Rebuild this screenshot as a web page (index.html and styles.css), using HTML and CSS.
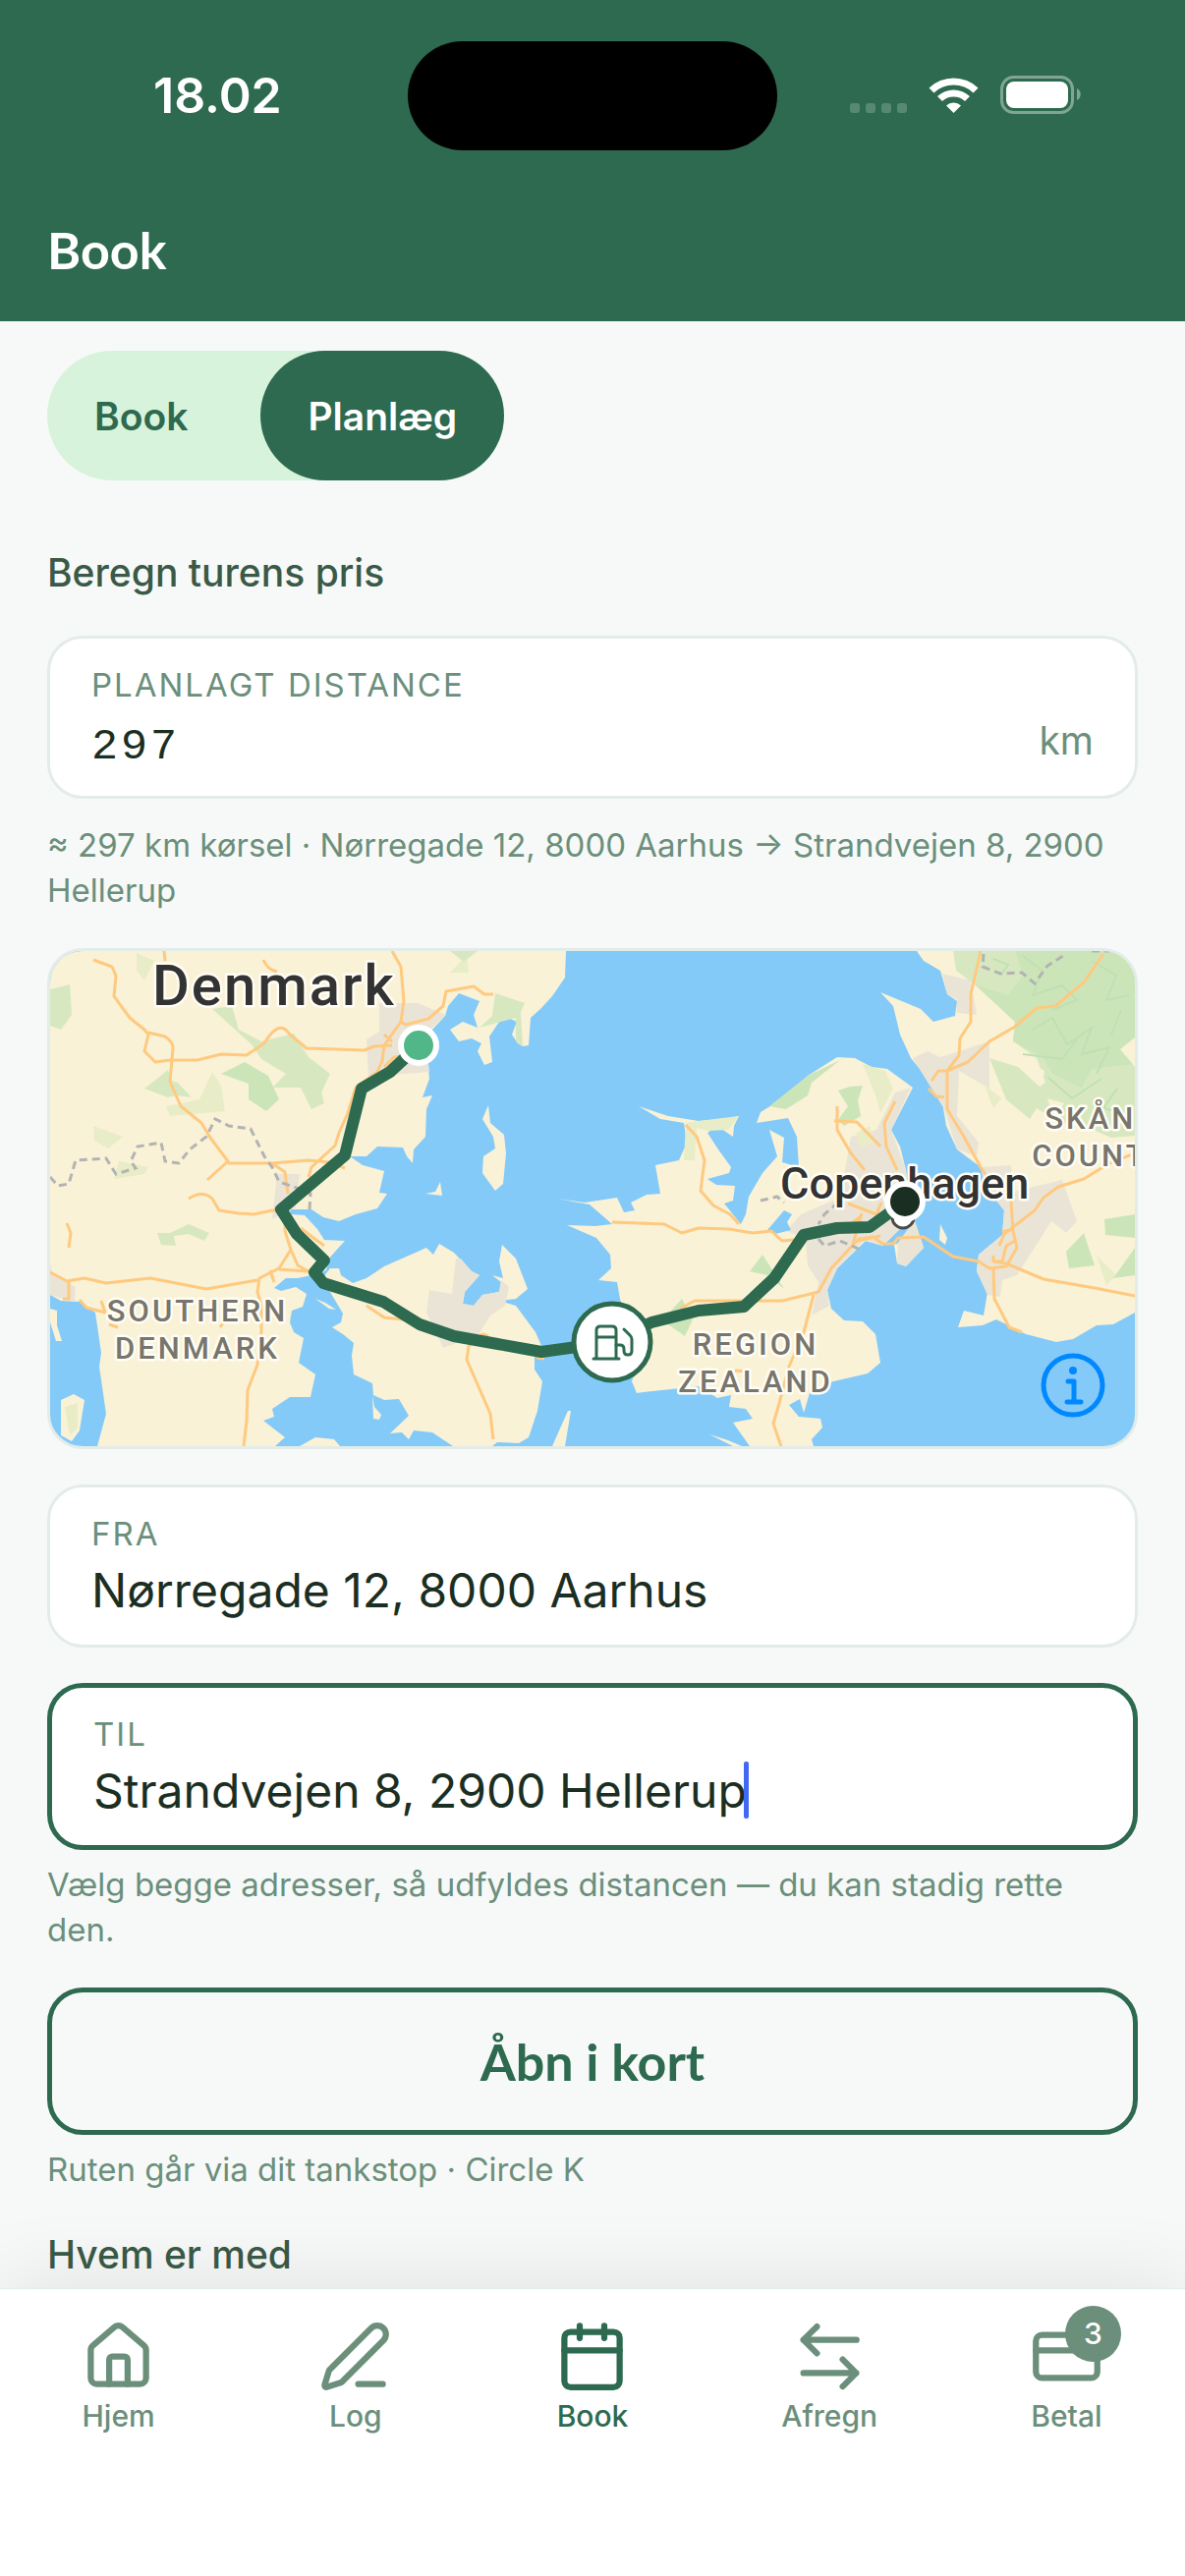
FILE: index.html
```html
<!DOCTYPE html>
<html lang="da">

<head>
    <meta charset="UTF-8">
    <meta name="viewport" content="width=device-width, initial-scale=1.0">
    <title>Book</title>
    <link rel="stylesheet" href="styles.css">
</head>

<body>
    <header class="header">
        <div class="status">
            <span class="status-time">18.02</span>
            <span class="island"></span>
            <svg class="status-icons" width="236" height="40" viewBox="0 0 236 40" fill="#fff">
                <g opacity="0.2">
                    <rect x="0" y="28" width="10" height="10" rx="3" />
                    <rect x="16" y="28" width="10" height="10" rx="3" />
                    <rect x="32" y="28" width="10" height="10" rx="3" />
                    <rect x="48" y="28" width="10" height="10" rx="3" />
                </g>
                <path d="M80.5 12.5a36 36 0 0 1 50 0l-5 5a29 29 0 0 0-40 0z" />
                <path d="M89 21a24 24 0 0 1 33 0l-5 5a17 17 0 0 0-23 0z" />
                <path d="M98 30.5a11 11 0 0 1 15 0l-7.5 7.5z" />
                <rect x="154.5" y="1.5" width="72" height="36" rx="12" fill="none" stroke="#fff" stroke-width="3" opacity="0.4" />
                <rect x="159" y="6" width="63" height="27" rx="8" />
                <path d="M231 13c5 2 5 10 0 12z" opacity="0.4" />
            </svg>
        </div>
        <h1 class="title">Book</h1>
    </header>

    <main class="content">
        <div class="segment">
            <button type="button">Book</button>
            <button type="button" class="active">Planlæg</button>
        </div>

        <h2 class="section-title">Beregn turens pris</h2>

        <div class="field">
            <label for="distance">PLANLAGT DISTANCE</label>
            <div class="field-row">
                <input id="distance" class="mono" type="text" value="297">
                <span class="unit">km</span>
            </div>
        </div>
        <p class="hint hint-far">≈ 297 km kørsel · Nørregade 12, 8000 Aarhus → Strandvejen 8, 2900 Hellerup</p>

        <div class="map">
            <svg class="map-canvas" viewBox="0 0 1104 504">
                <!-- land -->
                <g class="land">
                    <path d="M0 0H525L524 27 511 46 500 58 489 68 487 96 481 97 476 94 470 85 475 72 462 66 455 75 447 87 450 113 442 116 435 102 439 94 429 89 416 92 407 80 420 72 435 78 431 65 437 51 416 43 405 56 402 66 389 80 381 96 385 120 386 130 379 149 389 147 383 161 382 189 370 202 369 216 363 209 359 200 333 199 322 209 305 209 318 218 340 224 335 246 343 247 333 262 311 268 294 275 278 271 266 263H244L245 268 259 269 272 283 279 294 300 295 290 306 283 314 281 325 266 330 252 333 240 333 228 343 235 346 250 342 261 349 257 362 246 366 244 378 248 388 258 394 253 419 270 431 265 454H244L226 466 228 474 217 478 239 495 229 504H48L57 471 50 423 52 409 46 368 30 357 11 356 0 350z" />
                    <path d="M285 323H294L296 330 308 338 322 333 340 321 383 302 390 309 396 298 411 307 429 326 437 330 422 347 420 359 431 361 440 350 457 347 459 337 450 330 461 333 457 316 460 299 474 313 486 344 474 354 457 356 474 361 494 388 501 404 493 414 493 426 501 438 496 468 487 495 477 501 455 500 450 504H410L389 490 370 488 365 497 358 490 346 491 365 473 355 456 340 457 329 452 328 440 309 431 307 412 309 399 298 390 287 383 296 378 298 369 285 347 274 337z" />
                    <path d="M446 157 448 175 462 187 464 206 461 237 453 244 440 226 441 209 453 201 451 189 440 171z" />
                    <path d="M382 247 392 245 397 235 399 249zM254 504 270 495 289 497 295 504zM511 504 527 468 530 468 524 504zM11 457 24 451 35 457 30 488 22 499 11 493zM0 364 7 366 7 381 12 397 6 397 0 378zM270 354 280 358 291 365 284 364zM328 452 330 464 337 472 335 477 329 476z" />
                    <path d="M516 252 544 256 577 251 584 266 595 264 591 256 607 248 621 247 616 218 640 213 648 195 645 175 621 171 599 158 629 168 660 173 686 171 701 168 696 178 695 189 679 178 669 185 680 202 693 220 691 226 669 232 678 238 697 239 695 254 686 257 703 278 708 268 711 250 725 226 740 209 732 182 747 190 745 215 762 220 760 189 751 170 719 175 723 164 751 147 771 127 801 108 819 109 836 118 852 120 878 139 856 182 865 199 871 223 875 257 871 278 854 294 847 300 830 295 801 323 791 345 795 364 808 376 827 377 840 390 845 419 832 430 793 439 773 450 767 470 763 456 752 462 762 474 784 476 786 485 775 497 777 504H712L695 480 715 476 708 466 691 464 693 452 679 455 660 443 604 449 597 450 592 438 598 420 580 354 577 337 558 335 571 323 570 309 556 292 526 279 555 280 572 278 549 258z" />
                    <path d="M863 292 880 275 889 302 871 321 862 318 859 299zM906 278 913 292 911 299 905 294zM671 492 690 498 704 504 695 504z" />
                    <path d="M882 0 889 10 906 20 913 44 923 51 921 66 899 72 886 59 845 42 858 56 865 85 876 109 895 132 908 154 912 178 923 202 947 220 952 240 971 264 969 289 945 309 943 326 954 347 950 371 930 366 924 383 949 381 963 375 993 390 1024 398 1041 395 1065 381 1082 380 1104 368V0z" />
                </g>

                <!-- towns -->
                <g class="urban">
                    <path d="M335 53H374L403 65 381 85 386 123 324 128 322 90 335 82zM231 227H254L250 261 226 273zM0 318 3 330 26 342 25 357 0 350z" />
                    <path d="M386 345 409 349 413 313 418 313 429 326 437 330 422 347 420 359 431 361 440 350 457 347 459 335 467 342 463 361 448 371 435 392 400 404 383 368z" />
                    <path d="M876 139 856 182 871 223 875 257 863 289 845 299 828 295 801 323 791 345 793 361 775 371 782 337 771 320 769 292 749 285 764 268 804 251 815 189 841 182 860 144zM863 292 880 275 889 302 871 321 862 318z" />
                    <path d="M878 109 893 102 906 108 956 92 956 140 925 122 923 168 945 195 943 209 923 202 910 161zM908 23 937 30 943 65 923 63 923 49 913 44z" />
                    <path d="M947 220 978 218 980 245 1030 233 1045 275 1034 287 1019 275 984 330 969 335 967 352 954 350 943 326 945 309 969 289 971 264 952 240z" />
                </g>

                <!-- woods -->
                <g class="wood-light">
                    <path d="M118 158 152 151 165 123 174 137 178 163 122 168zM44 178 74 189 59 201 45 193zM70 214 100 220 96 227 65 232zM15 464 28 460 28 485 20 493zM88 2 106 10 96 30 88 20zM407 22 424 4 426 22z" />
                    <path d="M647 175 660 173 701 168 690 182 669 183 658 180 656 213 645 213zM827 115 850 122 858 140 845 165 841 150zM820 185 834 178 838 195 825 200zM950 135 968 150 960 160zM1023 118 1060 130 1050 150zM1065 310 1085 330 1075 340z" />
                </g>
                <g class="wood">
                    <path d="M165 59 185 56 192 80 215 92 248 84 263 108 285 125 276 144 279 155 266 161 255 139H226L240 125 215 110 205 95z" />
                    <path d="M96 140 120 121 124 132 130 134 144 149 128 147 120 149zM0 39 20 34 22 65 11 80 0 76zM109 287 122 287 141 278 162 287 157 295 141 288 126 290 128 300 113 299zM453 43 483 53 479 62 481 97 474 92 474 68 437 78 450 66zM407 0H435L421 11z" />
                    <path class="deep" d="M174 125 198 113 222 127 233 151 220 163 202 151 202 135z" />
                    <path class="deep" d="M732 158 771 127 804 111 775 134 771 147 749 161zM802 142 814 138 827 137 822 152 825 168 808 178 802 172 812 158zM712 326 725 309 736 326 747 344 730 330zM623 376 643 354 654 375 646 392zM1034 306 1052 287 1063 320 1037 323zM1073 273 1104 268V292L1074 289zM1082 333 1104 302V330z" />
                    <path d="M919 0 922 20 941 34 982 72 980 92 1004 109 1013 134 1007 138 985 118 956 109 973 151 997 171 1004 160 1028 175 1052 178 1080 190 1104 188V0z" />
                    <path class="deep" d="M982 0 990 25 975 45 941 34 982 72 980 92 1010 108 1020 125 1050 140 1060 120 1104 115V0z" />
                    <path class="clearing" d="M1089 100 1104 88V118zM1015 150 1032 155 1022 172zM1000 114 1012 122 1010 134 990 122z" />
                    <path class="wood-lines" d="M990 5 1010 20 1000 45 1030 35 1045 50 1020 60M1060 10 1085 25 1075 50 1098 45M1000 80 1020 68 1035 95 1060 78 1050 105 1078 98 1065 125M1090 60 1080 85M960 8 975 14 968 24M990 105 1030 110 1045 90M1015 128 1040 150 1070 130M1086 140 1072 160 1094 166" />
                </g>

                <!-- fjords -->
                <path class="water" d="M730 284 747 264 755 268 750 276 754 284 738 288zM848 300 864 284 878 276 862 298z" />

                <!-- roads -->
                <g class="roads">
                    <path d="M44 9 63 16 67 25 65 46 81 68 96 80 100 85 96 102 107 113 122 111 150 111 174 105 200 106 218 94Q233 68 244 85L261 99 320 101 330 97 348 96" />
                    <path d="M100 83 117 87Q126 94 125 99L122 133 133 158 154 175 163 190 181 214 160 233M181 216H226L263 213 285 215 300 221M226 216 239 225 242 247" />
                    <path d="M348 0 357 16 360 51 357 72 340 96 338 112 333 123 311 139 303 165 294 185 290 198 266 220 263 230M357 72 362 75 385 69 400 56 403 41 431 36 442 44H451M340 85 348 92M340 118 350 108 365 106" />
                    <path d="M141 252Q155 243 165 252L172 264 192 267 207 268 226 264 236 265M239 268V285L245 304 233 323 213 333 211 347 215 361V388L211 421 201 447 200 478 197 504M245 304 252 320 263 326 233 324M255 282 268 292 279 300M224 325 228 337" />
                    <path d="M0 327 17 336 35 333 57 338 102 333 159 344 211 335M19 337V354H13M30 355 37 363 56 368 52 356M17 277 21 287 19 302M217 9Q221 19 231 21M116 0 117 10M173 383 178 376M60 380 69 383" />
                    <path d="M322 361 340 373 359 375M446 392 440 390 426 402 424 416 448 471 451 497M495 414 503 415" />
                    <path d="M572 276 625 278 643 287 660 282 691 283 715 287 734 285 745 295 767 293M647 177 658 189 666 213 662 244 675 259 692 268 701 278" />
                    <path d="M641 364 656 356 745 356 782 347 795 323 821 295 845 290M817 299 823 293 838 291 847 298H858L863 292 889 291 919 311 945 316 956 323 973 321 984 302 980 285 978 254M777 350 767 388 752 423 741 464 736 481 744 504M697 427 708 428" />
                    <path d="M801 158V182L815 206 829 223M798 173 821 174 845 199M860 153 849 175 851 199 862 223M817 299 822 280 826 267M812 257 841 268 846 256M825 270 815 278" />
                    <path d="M947 0 937 44V72L926 89 925 106 913 122V161L930 189 947 220 955 232M897 132 904 122 913 122 934 113 956 92 982 77 1004 58 1023 56 1052 32 1072 3M894 140 902 148 910 149" />
                    <path d="M966 300 971 288 1002 264 1011 251 1026 240 1052 232 1078 216 1104 206M960 316 969 316 973 300 982 295M960 310V316L973 318 1011 334 1063 343 1104 351M960 323 961 354 976 383 989 388M969 286 980 283" />
                </g>

                <!-- county borders -->
                <g class="borders">
                    <path d="M0 230 8 239 19 237 26 213 57 211 67 227 87 221 82 214 89 199 113 195 117 214 131 216 142 202 159 189 168 171 182 178 204 181 218 209 226 220 233 235 248 240 265 247 264 263" />
                    <path d="M950 3 949 16 967 23 989 22 1002 33 1015 15 1034 3M1060 0H1078M723 254 740 250 747 256M802 256 788 268 782 278M782 293 788 300 804 295 827 305" />
                </g>

                <g class="labels">
                    <text class="label-country" x="104" y="55">Denmark</text>
                    <text class="label-city" x="743" y="252">Copenhagen</text>
                    <text class="label-region" x="150" y="377">SOUTHERN</text>
                    <text class="label-region" x="150" y="415">DENMARK</text>
                    <text class="label-region" x="718" y="411">REGION</text>
                    <text class="label-region" x="718" y="449">ZEALAND</text>
                    <text class="label-region" x="1069" y="181">SKÅNE</text>
                    <text class="label-region" x="1069" y="219">COUNTY</text>
                </g>

                <!-- route -->
                <circle cx="868" cy="271" r="11" fill="#fff" stroke="#4a4a4a" stroke-width="3" />
                <path class="route" d="M375 96 346 123 317 140 300 208 235 263 251 288 279 315 269 327 278 338 339 357 376 380 411 392 500 408 572 398 612 378 660 366 706 362 737 333 767 289 801 282 834 281 870 255" />
                <circle cx="375" cy="96" r="18" fill="#52b788" stroke="#fff" stroke-width="6" />
                <circle cx="870" cy="255" r="18" fill="#1b2e22" stroke="#fff" stroke-width="6" />
                <circle cx="572" cy="398" r="39" fill="#fff" stroke="#2d6a4f" stroke-width="5" />
                <g class="fuel">
                    <path d="M556 415V386Q556 382 560 382H572Q576 382 576 386V415M553 415H579M556 393H576" />
                    <path d="M576 401H580Q584 401 584 405V407Q584 411 588 411 592 411 592 407V395Q592 393 590 391L584 385" />
                </g>
            </svg>
            <button type="button" class="map-info" aria-label="Info">
                <svg width="66" height="66" viewBox="0 0 66 66" fill="none" stroke="#0088ff">
                    <circle cx="33" cy="33" r="30" stroke-width="5" />
                    <circle cx="33" cy="18" r="4" fill="#0088ff" stroke="none" />
                    <path d="M28 29h6v20M27 50h14" stroke-width="5" stroke-linecap="round" stroke-linejoin="round" />
                </svg>
            </button>
        </div>

        <div class="field">
            <label for="from">FRA</label>
            <div class="field-row">
                <input id="from" type="text" value="Nørregade 12, 8000 Aarhus">
            </div>
        </div>

        <div class="field focused">
            <label for="to">TIL</label>
            <div class="field-row">
                <input id="to" type="text" value="Strandvejen 8, 2900 Hellerup">
                <span class="caret"></span>
            </div>
        </div>
        <p class="hint">Vælg begge adresser, så udfyldes distancen — du kan stadig rette den.</p>

        <button type="button" class="open-map">Åbn i kort</button>
        <p class="hint">Ruten går via dit tankstop · Circle K</p>

        <h2 class="section-title last">Hvem er med</h2>
    </main>

    <nav class="tabs">
        <a href="#hjem">
            <svg class="icon" viewBox="0 0 24 24">
                <path d="M15 21v-8a1 1 0 0 0-1-1h-4a1 1 0 0 0-1 1v8" />
                <path d="M3 10a2 2 0 0 1 .709-1.528l7-6a2 2 0 0 1 2.582 0l7 6A2 2 0 0 1 21 10v9a2 2 0 0 1-2 2H5a2 2 0 0 1-2-2z" />
            </svg>
            Hjem
        </a>
        <a href="#log">
            <svg class="icon" viewBox="0 0 24 24">
                <path d="M13 21h8" />
                <path d="M21.174 6.812a1 1 0 0 0-3.986-3.987L3.842 16.174a2 2 0 0 0-.5.83l-1.321 4.352a.5.5 0 0 0 .623.622l4.353-1.32a2 2 0 0 0 .83-.497z" />
            </svg>
            Log
        </a>
        <a href="#book" class="active">
            <svg class="icon" viewBox="0 0 24 24">
                <path d="M8 2v4M16 2v4M3 10h18" />
                <rect x="3" y="4" width="18" height="18" rx="2" />
            </svg>
            Book
        </a>
        <a href="#afregn">
            <svg class="icon" viewBox="0 0 24 24">
                <path d="M7.8 2.3 3.4 6.6l4.4 4.4M3.4 6.6h17.3M16.2 13l4.4 4.4-4.4 4.4M20.6 17.4H3.4" />
            </svg>
            Afregn
        </a>
        <a href="#betal">
            <span class="icon-wrap">
                <svg class="icon" viewBox="0 0 24 24">
                    <rect x="2" y="5" width="20" height="14" rx="2" />
                    <path d="M2 10h20" />
                </svg>
                <span class="badge">3</span>
            </span>
            Betal
        </a>
    </nav>
</body>

</html>
```

FILE: styles.css
```css
* {
    box-sizing: border-box;
}

body {
    display: flex;
    flex-direction: column;
    min-height: 100vh;
    margin: 0;
    font-family: Inter, "Noto Sans", sans-serif;
    color: #1b2e22;
    background: #f7f9f8;
}

h1,
h2,
p {
    margin: 0;
}

button,
input {
    padding: 0;
    border: 0;
    font-family: inherit;
    color: inherit;
    background: none;
}

/* header */
.header {
    color: #fff;
    background: #2d6a4f;
}

.status {
    display: grid;
    grid-template-columns: 1fr 376px 1fr;
    align-items: center;
    height: 188px;
    padding-top: 6px;
}

.status-time {
    padding-left: 156px;
    font-size: 50px;
    font-weight: 600;
}

.island {
    height: 111px;
    border-radius: 56px;
    background: #000;
}

.status-icons {
    margin-left: 74px;
}

.title {
    padding: 36px 48px 43px;
    font-family: Lato, sans-serif;
    font-size: 52px;
    font-weight: 700;
    line-height: 60px;
}

/* content */
.content {
    flex: 1;
    padding: 30px 48px 0;
}

.segment {
    display: flex;
    gap: 26px;
    width: fit-content;
    border-radius: 66px;
    background: #d8f3dc;
}

.segment button {
    height: 132px;
    padding: 0 48px;
    border-radius: 66px;
    font-size: 39px;
    font-weight: 600;
    color: #2d6a4f;
}

.segment .active {
    color: #fff;
    background: #2d6a4f;
}

.section-title {
    margin: 66px 0 36px;
    font-size: 39px;
    font-weight: 500;
    line-height: 56px;
    color: #3a5a47;
}

.section-title.last {
    margin: 36px 0 0;
}

.field {
    margin-bottom: 36px;
    padding: 27px 42px;
    border: 3px solid #e3ece8;
    border-radius: 36px;
    background: #fff;
}

.field label {
    display: block;
    margin-bottom: 8px;
    font-size: 33px;
    line-height: 40px;
    letter-spacing: 2px;
    color: #6b8f7b;
}

.field-row {
    display: flex;
    align-items: center;
}

.field input {
    flex: 1;
    min-width: 0;
    height: 58px;
    font-size: 48px;
    outline: 0;
}

.field .mono {
    padding-top: 12px;
    font-family: "Liberation Mono", monospace;
    font-size: 45px;
    letter-spacing: 3px;
}

.unit {
    font-size: 39px;
    line-height: 58px;
    color: #6b8f7b;
}

.focused {
    margin-bottom: 0;
    border: 5px solid #2d6a4f;
}

.focused input {
    flex: none;
    field-sizing: content;
}

.caret {
    width: 5px;
    height: 58px;
    margin-left: -3px;
    border-radius: 2px;
    background: #4169f5;
}

.hint {
    margin-top: 12px;
    font-size: 33px;
    line-height: 46px;
    color: #6b8f7b;
}

.hint-far {
    margin: -12px 0 36px;
}

.open-map {
    display: block;
    width: 100%;
    height: 150px;
    margin-top: 36px;
    border: 5px solid #2d6a4f;
    border-radius: 36px;
    font-family: Lato, sans-serif;
    font-size: 52px;
    font-weight: 700;
    color: #2d6a4f;
}

/* map */
.map {
    position: relative;
    margin-bottom: 36px;
    border: 3px solid #e3ece8;
    border-radius: 36px;
    overflow: hidden;
    background: #84caf9;
}

.map-canvas {
    display: block;
    width: 100%;
}

.map-info {
    position: absolute;
    right: 30px;
    bottom: 29px;
    width: 66px;
    height: 66px;
}

.land {
    fill: #f9f2d6;
}

.urban {
    fill: #eae4d6;
}

.wood-light {
    fill: #e8edc7;
}

.wood {
    fill: #d7e8c0;
}

.wood .deep {
    fill: #cbe5b9;
}

.wood .clearing {
    fill: #f9f2d6;
}

.wood .wood-lines {
    fill: none;
    stroke: #c0e0b2;
    stroke-width: 2;
}

.water {
    fill: #84caf9;
}

.roads {
    fill: none;
    stroke: #ffc97f;
    stroke-width: 3;
    stroke-linejoin: round;
}

.borders {
    fill: none;
    stroke: #b3b3b3;
    stroke-width: 3;
    stroke-dasharray: 8 5;
}

.labels {
    font-family: Roboto, sans-serif;
    font-weight: 500;
    paint-order: stroke;
    stroke: #fffdf5;
    stroke-width: 5;
    stroke-linejoin: round;
}

.label-country {
    font-size: 58px;
    letter-spacing: 2px;
    fill: #333;
}

.label-city {
    font-size: 45px;
    fill: #333;
}

.label-region {
    font-size: 31px;
    letter-spacing: 3px;
    text-anchor: middle;
    fill: #78756c;
}

.route {
    fill: none;
    stroke: #2d6a4f;
    stroke-width: 12;
    stroke-linejoin: round;
}

.fuel {
    fill: none;
    stroke: #2d6a4f;
    stroke-width: 3;
    stroke-linecap: round;
    stroke-linejoin: round;
}

/* tab bar */
.tabs {
    display: grid;
    grid-template-columns: repeat(5, 1fr);
    height: 293px;
    padding-top: 31px;
    border-top: 1px solid #e3ece8;
    background: #fff;
    box-shadow: 0 -12px 72px rgba(0, 0, 0, 0.08);
}

.tabs a {
    display: flex;
    flex-direction: column;
    align-items: center;
    gap: 5px;
    height: 120px;
    font-size: 30px;
    font-weight: 500;
    line-height: 36px;
    text-decoration: none;
    color: #6b8f7b;
}

.tabs .active {
    color: #2d6a4f;
}

.icon {
    display: block;
    width: 75px;
    height: 75px;
    fill: none;
    stroke: currentColor;
    stroke-width: 2;
    stroke-linecap: round;
    stroke-linejoin: round;
}

.icon-wrap {
    position: relative;
}

.badge {
    position: absolute;
    top: -14px;
    left: 36px;
    width: 57px;
    border-radius: 50%;
    font-size: 30px;
    line-height: 57px;
    text-align: center;
    color: #fff;
    background: #6b8f7b;
}
```
